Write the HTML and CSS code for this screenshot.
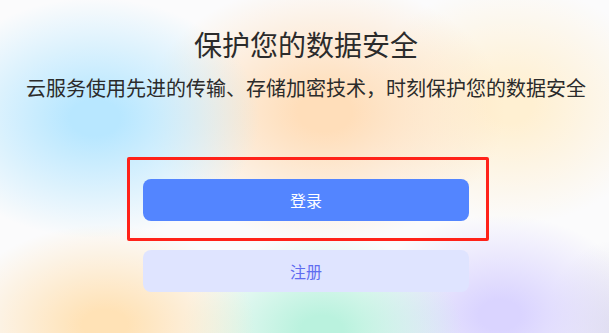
FILE: index.html
```html
<!DOCTYPE html>
<html lang="zh-CN">
<head>
    <meta charset="UTF-8">
    <meta name="viewport" content="width=device-width, initial-scale=1.0">
    <title>保护您的数据安全</title>
    <link rel="stylesheet" href="styles.css">
</head>
<body>
    <main class="page">
        <h1 class="title">保护您的数据安全</h1>
        <p class="subtitle">云服务使用先进的传输、存储加密技术，时刻保护您的数据安全</p>

        <div class="actions">
            <!-- highlighted area -->
            <div class="highlight">
                <button class="btn btn-primary">登录</button>
            </div>
            <button class="btn btn-secondary">注册</button>
        </div>
    </main>
</body>
</html>
```

FILE: styles.css
```css
/* Reset */
* {
    margin: 0;
    padding: 0;
    box-sizing: border-box;
}

html, body {
    height: 100%;
}

body {
    font-family: "Noto Sans CJK SC", "Noto Sans", sans-serif;
    color: #2b2b2b;
    background-color: #fbfbfc;
    /* soft colour blobs */
    background-image:
        radial-gradient(ellipse 165px 120px at 95px 118px, rgba(184, 231, 255, 1) 15%, rgba(184, 231, 255, 0)),
        radial-gradient(ellipse 180px 130px at 325px 112px, rgba(255, 222, 186, 1) 15%, rgba(255, 222, 186, 0)),
        radial-gradient(ellipse 150px 120px at 510px 105px, rgba(255, 240, 210, 1) 15%, rgba(255, 240, 210, 0)),
        radial-gradient(ellipse 150px 100px at 105px 325px, rgba(255, 226, 182, 1) 15%, rgba(255, 226, 182, 0)),
        radial-gradient(ellipse 140px 95px at 322px 330px, rgba(186, 242, 222, 1) 15%, rgba(186, 242, 222, 0)),
        radial-gradient(ellipse 140px 100px at 500px 315px, rgba(218, 212, 255, 1) 15%, rgba(218, 212, 255, 0)),
        radial-gradient(ellipse 70px 90px at 615px 330px, rgba(225, 224, 236, 1), rgba(225, 224, 236, 0));
    overflow: hidden;
}

.page {
    padding: 24px 0 0 3px;
    text-align: center;
}

.title {
    font-size: 28px;
    font-weight: 400;
    line-height: 40px;
}

.subtitle {
    margin-top: 10px;
    font-size: 20px;
    line-height: 28px;
}

.actions {
    margin-top: 55px;
    display: flex;
    flex-direction: column;
}

.highlight {
    width: 362px;
    margin-left: 124px;
    padding: 19px 17px 17px 13px;
    border: 3px solid #ff2219;
    border-radius: 2px;
}

.btn {
    display: block;
    width: 326px;
    height: 42px;
    border: none;
    border-radius: 8px;
    font-family: inherit;
    font-size: 16px;
    cursor: pointer;
}

.btn-primary {
    background-color: #5385ff;
    color: #ffffff;
}

.btn-secondary {
    margin: 9px auto 0;
    background-color: #dfe4ff;
    color: #5f6df0;
}
```
